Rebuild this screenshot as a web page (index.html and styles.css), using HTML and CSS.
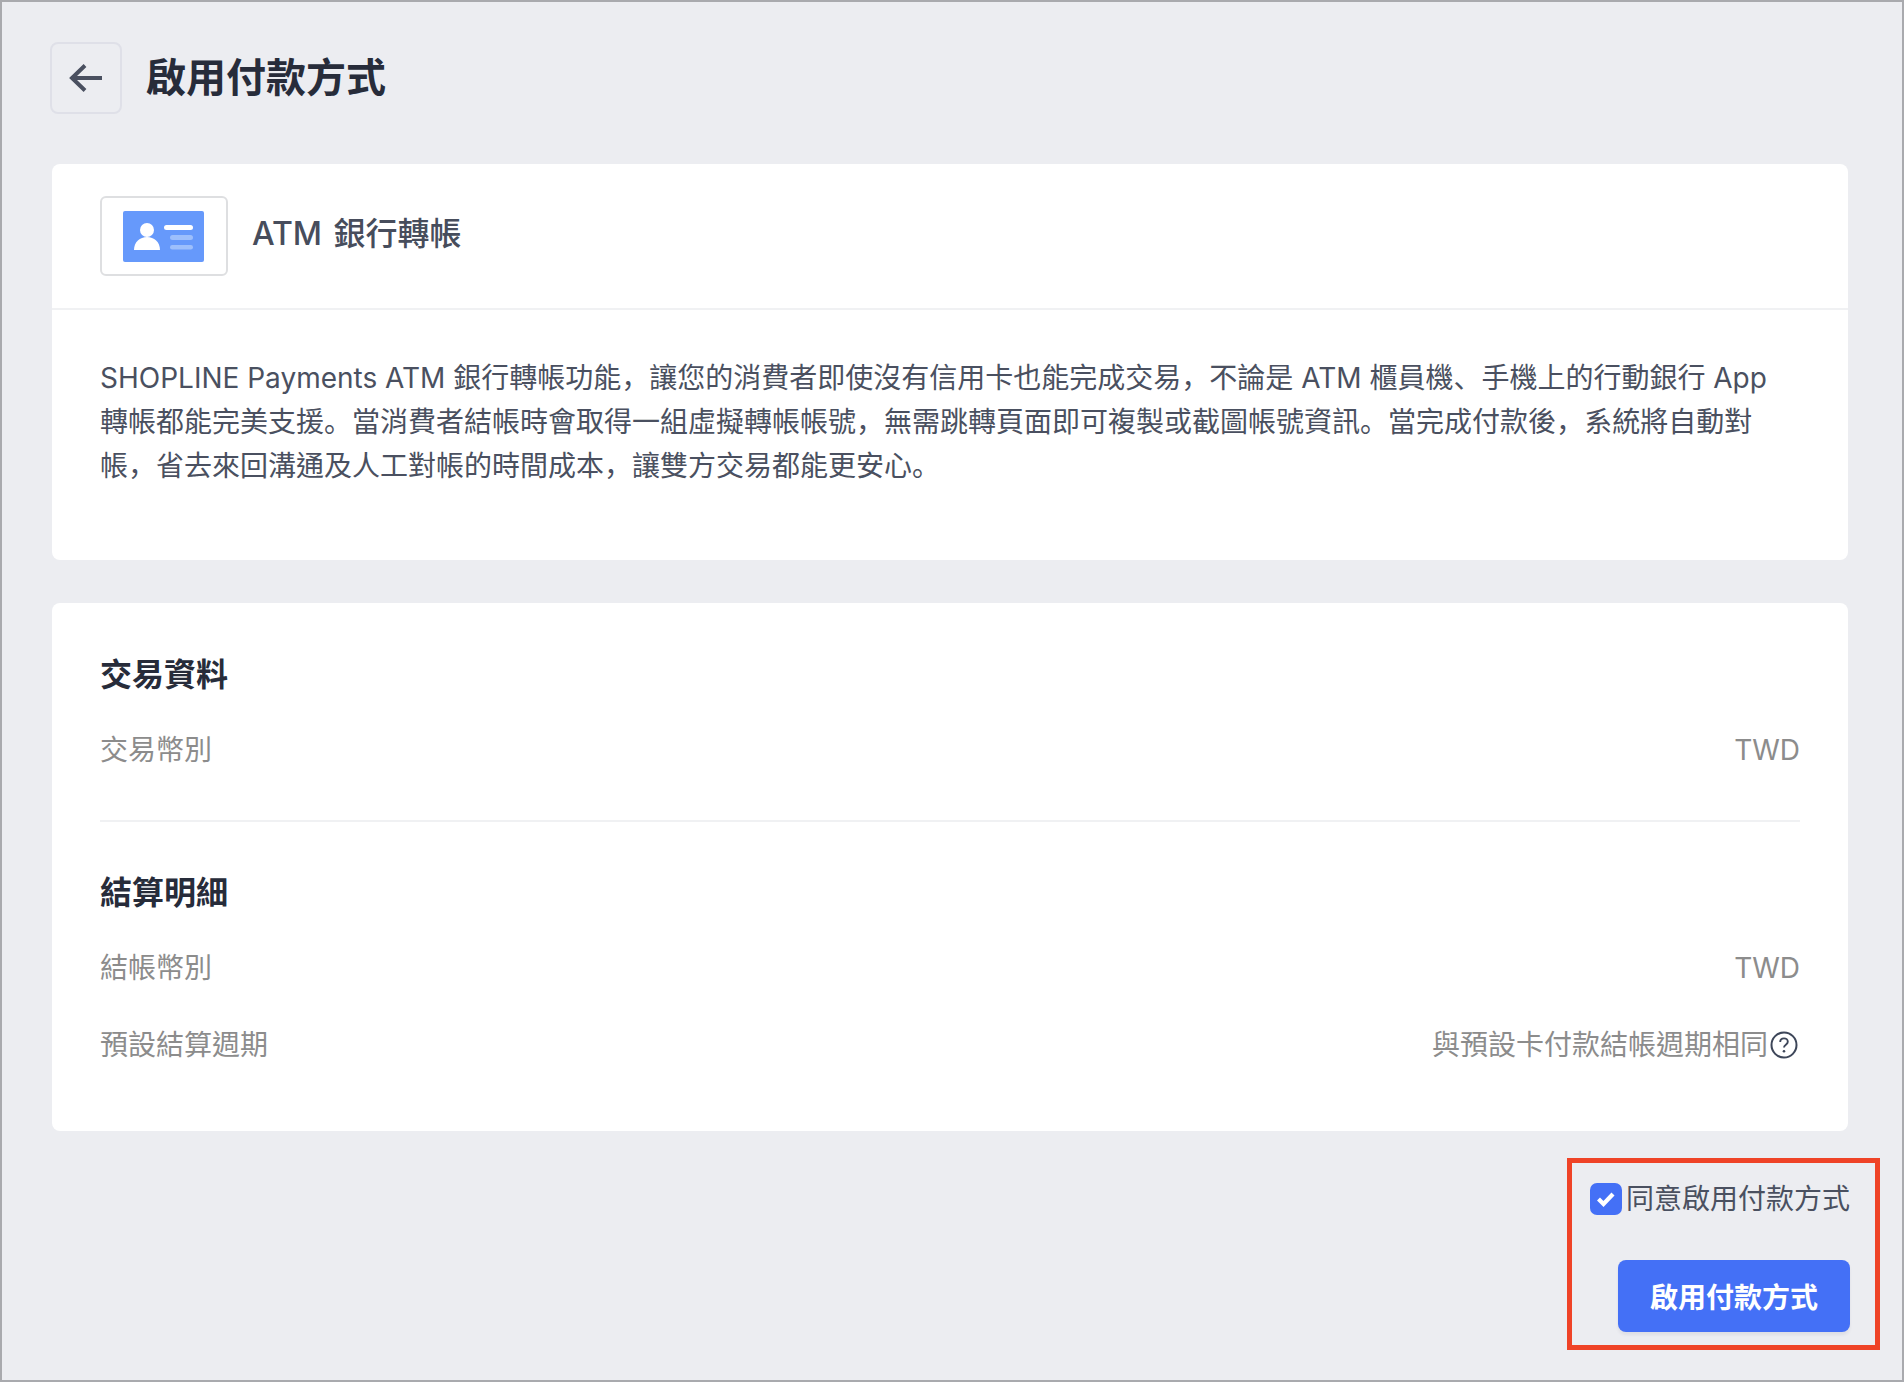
FILE: index.html
```html
<!DOCTYPE html>
<html lang="zh-Hant">
<head>
<meta charset="utf-8">
<title>啟用付款方式</title>
<link rel="stylesheet" href="styles.css">
</head>
<body>
<div class="page">
  <header class="page-header">
    <button class="back" type="button" aria-label="返回">
      <svg width="36" height="32" viewBox="0 0 36 32"><path d="M34 16H5M17 3.500 4 16l13 12.500" fill="none" stroke="#4a5060" stroke-width="4"/></svg>
    </button>
    <h1 class="page-title">啟用付款方式</h1>
  </header>

  <section class="card">
    <div class="method-head">
      <div class="logo-box">
        <svg width="81" height="51" viewBox="0 0 81 51">
          <rect width="81" height="51" rx="2" fill="#6699fb"/>
          <circle cx="24" cy="19" r="7" fill="#fff"/>
          <path d="M11 39c0-8 6-13 13-13s13 5 13 13z" fill="#fff"/>
          <rect x="41" y="14" width="29" height="5" rx="2.500" fill="#fff"/>
          <rect x="47" y="24" width="23" height="5" rx="2.500" fill="#9dbffc"/>
          <rect x="47" y="34" width="23" height="4.500" rx="2.200" fill="#9dbffc"/>
        </svg>
      </div>
      <h2 class="method-name">ATM 銀行轉帳</h2>
    </div>
    <p class="method-desc">SHOPLINE Payments ATM 銀行轉帳功能<span class="pn" lang="zh-Hans">，</span>讓您的消費者即使沒有信用卡也能完成交易<span class="pn" lang="zh-Hans">，</span>不論是 ATM 櫃員機<span class="pn" lang="zh-Hans">、</span>手機上的行動銀行 App 轉帳都能完美支援<span class="pn" lang="zh-Hans">。</span>當消費者結帳時會取得一組虛擬轉帳帳號<span class="pn" lang="zh-Hans">，</span>無需跳轉頁面即可複製或截圖帳號資訊<span class="pn" lang="zh-Hans">。</span>當完成付款後<span class="pn" lang="zh-Hans">，</span>系統將自動對帳<span class="pn" lang="zh-Hans">，</span>省去來回溝通及人工對帳的時間成本<span class="pn" lang="zh-Hans">，</span>讓雙方交易都能更安心<span class="pn" lang="zh-Hans">。</span></p>
  </section>

  <section class="card details">
    <h3 class="section-title">交易資料</h3>
    <div class="row"><span>交易幣別</span><span>TWD</span></div>
    <hr class="divider">
    <h3 class="section-title">結算明細</h3>
    <div class="row"><span>結帳幣別</span><span>TWD</span></div>
    <div class="row row-next"><span>預設結算週期</span>
      <span class="with-help">與預設卡付款結帳週期相同
        <svg class="help" width="28" height="28" viewBox="0 0 28 28"><circle cx="14" cy="14" r="12.500" fill="none" stroke="#3d4659" stroke-width="2"/><path d="M10.200 11c0-2.200 1.700-3.600 3.800-3.600s3.800 1.400 3.800 3.300c0 3-3.800 3-3.800 5.800" fill="none" stroke="#3d4659" stroke-width="1.900"/><circle cx="14" cy="20.300" r="1.300" fill="#3d4659"/></svg>
      </span>
    </div>
  </section>

  <footer class="actions">
    <div class="highlight"></div>
    <label class="agree">
      <span class="check"><svg width="20" height="16" viewBox="0 0 20 16"><path d="M2.500 8 7.500 13 17 3" fill="none" stroke="#fff" stroke-width="4.200"/></svg></span>
      同意啟用付款方式
    </label>
    <button class="primary" type="button">啟用付款方式</button>
  </footer>
</div>
</body>
</html>
```
FILE: styles.css
```css
* { box-sizing: border-box; }
html, body { margin: 0; padding: 0; }
body {
  font-family: Inter, "Noto Sans CJK TC", sans-serif;
  background: #ecedf1;
  color: #4a5060;
}
.page {
  height: 1382px;
  border: 2px solid #a9aaae;
  padding: 40px 52px 0 48px;
  background: #ecedf1;
  overflow: hidden;
}
.page-header { display: flex; align-items: center; gap: 24px; height: 72px; margin-bottom: 50px; }
.back {
  width: 72px; height: 72px; padding: 0;
  display: flex; align-items: center; justify-content: center;
  background: transparent;
  border: 2px solid #dfe0e8;
  border-radius: 8px;
}
.page-title { margin: 0; font-size: 40px; line-height: 56px; font-weight: 700; color: #272c3a; }
.card {
  margin: 0 2px;
  background: #fff;
  border-radius: 8px;
}
.method-head {
  display: flex; align-items: flex-start; gap: 24px;
  padding: 32px 48px;
  border-bottom: 2px solid #f0f1f3;
}
.logo-box {
  width: 128px; height: 80px;
  display: flex; align-items: center; justify-content: center;
  padding-right: 1px;
  border: 2px solid #dedfe1;
  border-radius: 6px;
}
.method-name { margin: 14px 0 0; font-size: 32px; line-height: 48px; font-weight: 500; color: #474d5c; word-spacing: 3px; }
.method-desc { margin: 0; padding: 46px 48px 72px; font-size: 28px; line-height: 44px; color: #4a5060; }
.pn { font-family: "Noto Sans CJK SC", sans-serif; line-height: 0; }
.details { margin-top: 43px; padding: 48px 48px 64px; }
.section-title { margin: 0 0 29px; font-size: 32px; line-height: 48px; font-weight: 700; color: #272c3a; }
.row { display: flex; justify-content: space-between; align-items: center; font-size: 28px; line-height: 44px; color: #8c8c8c; }
.row-next { margin-top: 33px; }
.with-help { display: flex; align-items: center; gap: 2px; }
.help { margin-right: 2px; }
.divider { height: 2px; margin: 48px 0 47px; border: 0; background: #f0f1f3; }
.actions { position: relative; display: flex; flex-direction: column; align-items: flex-end; padding-top: 46px; }
.highlight {
  position: absolute;
  top: 27px; right: -30px;
  width: 313px; height: 192px;
  border: 5px solid #ef4327;
}
.agree { display: flex; align-items: center; gap: 4px; font-size: 28px; line-height: 44px; color: #4a5060; }
.check {
  width: 32px; height: 32px;
  display: flex; align-items: center; justify-content: center;
  background: #4470f6;
  border-radius: 7px;
}
.primary {
  margin-top: 39px;
  width: 232px; height: 72px;
  border: 0; border-radius: 8px;
  background: #4470f6;
  color: #fff;
  font: 700 28px Inter, "Noto Sans CJK TC", sans-serif;
  box-shadow: 0 3px 3px rgba(60, 70, 100, .08);
}
```
